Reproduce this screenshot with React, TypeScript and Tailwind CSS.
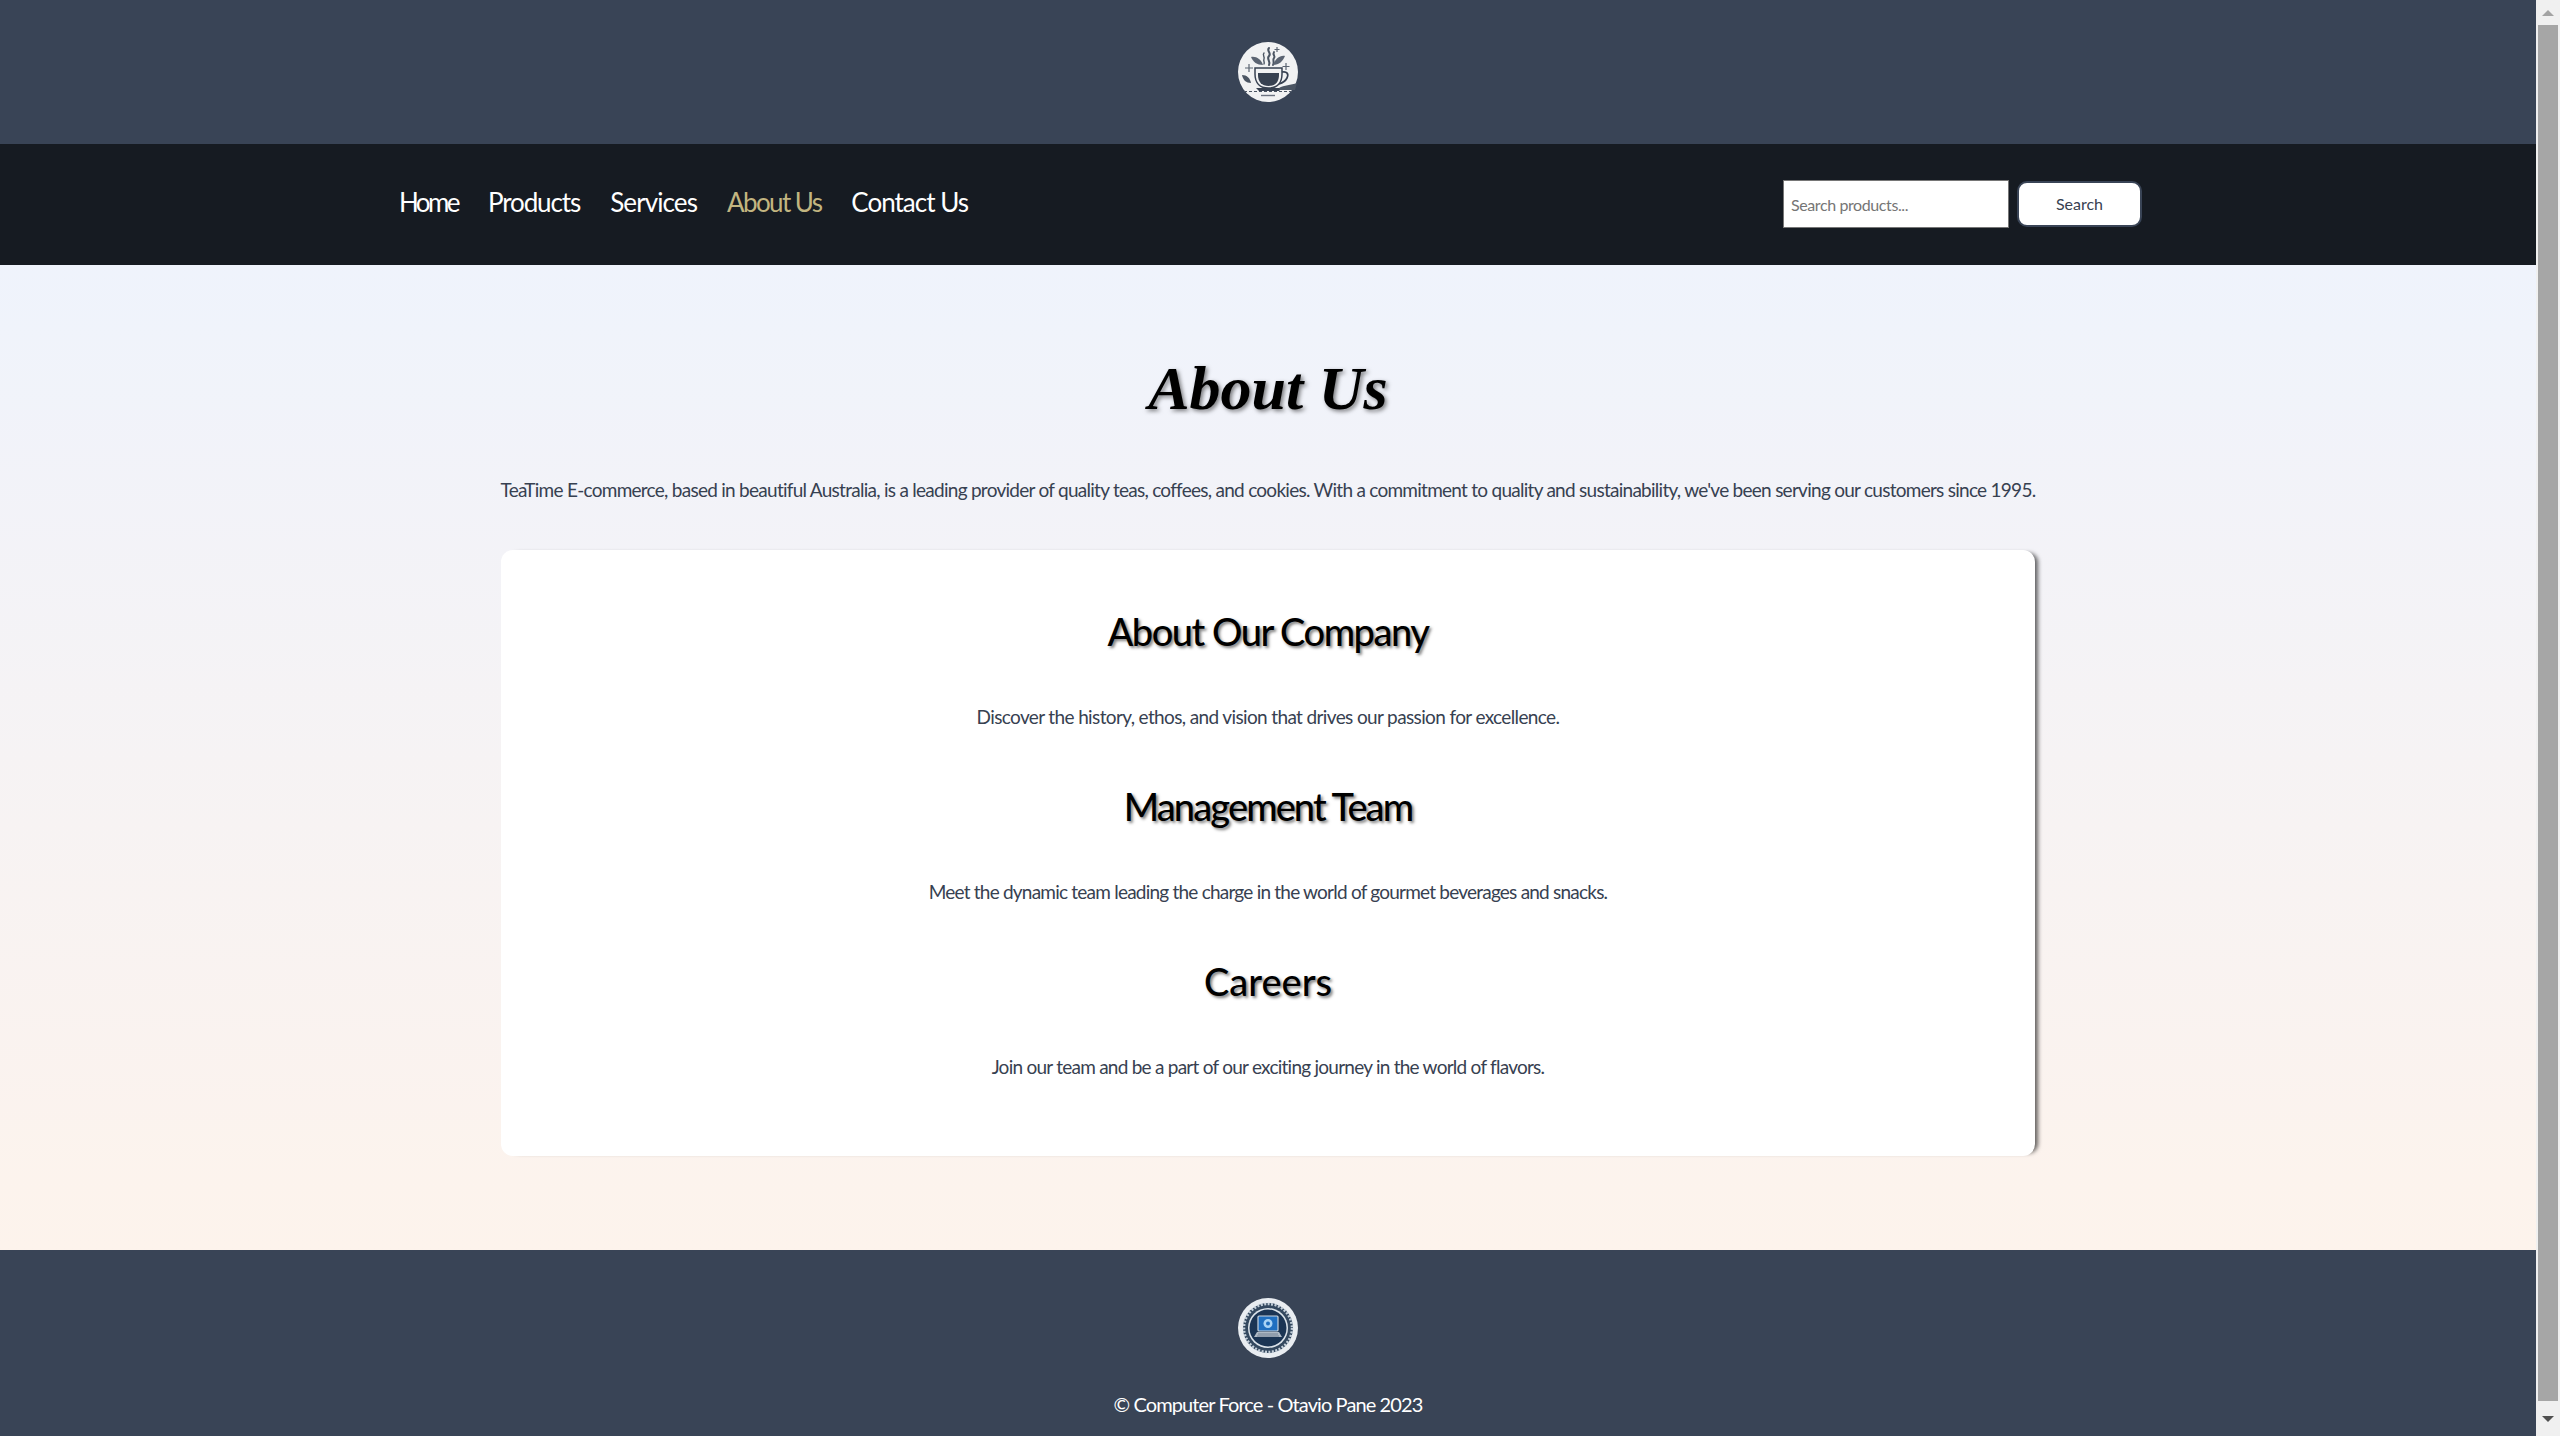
import React from "react";

function TeaLogo() {
  return (
    <svg viewBox="0 0 60 60" className="w-[60px] h-[60px] block">
      <circle cx="30" cy="30" r="30" fill="#f1f2f3" />
      <g fill="none" stroke="#4b5563" strokeWidth="2" strokeLinecap="round">
        <path d="M31 6c-3 3 3 5 0 8s2 5 0 9" />
        <path d="M36 10c-2 3 2 4 0 6s1 4-1 7" />
        <path d="M26 11c-2 2 1 4 0 6s1 3 0 5" strokeWidth="1.400" />
      </g>
      <path d="M13 15c5-1 10 2 12 8-6 0-10-3-12-8z" fill="#5b6472" />
      <path d="M47 14c-5-1-10 3-12 9 6 0 10-4 12-9z" fill="#5b6472" />
      <path d="M4 33c5 0 8 3 9 8-5 0-8-3-9-8z" fill="#4b5563" />
      <path d="M11 22v8M7 26h8M48 21v7M44.500 24.500h7M39 5v5M36.500 7.500h5" stroke="#5b6472" strokeWidth="1.200" />
      <path d="M17 26h27v6c0 9-5 14-13.500 14S17 41 17 32z" fill="#f1f2f3" stroke="#374151" strokeWidth="1.500" />
      <path d="M20 31h21v2c0 7-4 11-10.500 11S20 40 20 33z" fill="#374151" />
      <path d="M44 30c5-1 7 2 5 6s-5 5-8 6" fill="none" stroke="#374151" strokeWidth="1.700" />
      <path d="M18 46h26l-3 3H21z" fill="#374151" />
      <path d="M41 46c5-3 12-3 18-5l-2 7H42z" fill="#4b5563" />
      <path d="M6 49.500h48" stroke="#4b5563" strokeWidth="1.200" strokeDasharray="3 2" />
      <path d="M23 53.500h14" stroke="#6b7280" strokeWidth="1.400" />
    </svg>
  );
}

function ForceLogo() {
  return (
    <svg viewBox="0 0 60 60" className="w-[60px] h-[60px] block">
      <circle cx="30" cy="30" r="30" fill="#e9edf1" />
      <circle cx="30" cy="30" r="25" fill="#33485f" />
      <circle cx="30" cy="30" r="24" fill="none" stroke="#c5d0da" strokeWidth="2.500" strokeDasharray="2 1.500" />
      <circle cx="30" cy="30" r="20" fill="#dbe3ea" />
      <circle cx="30" cy="30" r="18.500" fill="#1b3554" />
      <rect x="20" y="18" width="20" height="15" rx="1" fill="#1f6fc0" stroke="#c9d3dc" strokeWidth="1.200" />
      <circle cx="30" cy="25.500" r="4.500" fill="#a8d3f5" />
      <circle cx="30" cy="25.500" r="2" fill="#1f6fc0" />
      <path d="M19 34h22l3 5H16z" fill="#aeb9c4" />
      <path d="M20 36h20M19 38h22" stroke="#64748b" strokeWidth="0.800" />
    </svg>
  );
}

const navItems = [
  { label: "Home", cls: "text-white tracking-[-2.6px]" },
  { label: "Products", cls: "text-white tracking-[-1.1px]" },
  { label: "Services", cls: "text-white tracking-[-0.9px]" },
  { label: "About Us", cls: "text-[#c2b580] tracking-[-1.6px]" },
  { label: "Contact Us", cls: "text-white tracking-[-1px]" },
];

const sections = [
  {
    title: "About Our Company",
    titleCls: "tracking-[-1.5px]",
    textCls: "tracking-[-0.63px]",
    text: "Discover the history, ethos, and vision that drives our passion for excellence.",
  },
  {
    title: "Management Team",
    titleCls: "tracking-[-1.9px]",
    textCls: "tracking-[-0.78px]",
    text: "Meet the dynamic team leading the charge in the world of gourmet beverages and snacks.",
  },
  {
    title: "Careers",
    titleCls: "tracking-[0px]",
    textCls: "tracking-[-0.75px]",
    text: "Join our team and be a part of our exciting journey in the world of flavors.",
  },
];

export default function App() {
  return (
    <div className="flex h-screen overflow-hidden font-['Lato',sans-serif]">
      <div className="w-[2536px] shrink-0 flex flex-col">
        <header className="h-[144px] shrink-0 bg-[#394456] flex items-center justify-center">
          <TeaLogo />
        </header>
        <nav className="h-[121px] shrink-0 bg-[#161b22]">
          <div className="w-[1748px] h-full mx-auto flex items-center justify-between pl-[5px]">
            <ul className="flex gap-[30px] text-[26px] mb-[4px]">
              {navItems.map((n) => (
                <li key={n.label} className={n.cls}>
                  {n.label}
                </li>
              ))}
            </ul>
            <form className="flex items-center gap-[8px] mt-[-1px]">
              <input
                placeholder="Search products..."
                className="w-[226px] h-[48px] bg-white border border-[#767676] px-[7px] text-[16px] tracking-[-0.4px] text-[#111827] placeholder:text-[#757575] outline-none"
              />
              <button
                type="button"
                className="w-[125px] h-[46px] bg-white border-2 border-[#394456] rounded-[10px] text-[16px] text-[#374151]"
              >
                Search
              </button>
            </form>
          </div>
        </nav>
        <main className="h-[985px] shrink-0 bg-gradient-to-b from-[#eff3fc] to-[#fdf3ec] flex flex-col items-center">
          <h1 className="mt-[85px] h-[76px] leading-[76px] text-[62px] font-bold italic font-['Liberation_Serif',serif] text-black [text-shadow:2px_2px_4px_rgba(0,0,0,0.5)]">
            About Us
          </h1>
          <p className="mt-[48px] h-[32px] leading-[32px] text-[19px] tracking-[-0.73px] text-[#374151] whitespace-nowrap">
            TeaTime E-commerce, based in beautiful Australia, is a leading provider of quality teas, coffees, and cookies. With a commitment to quality and sustainability, we've been serving our customers since 1995.
          </p>
          <section className="mt-[44px] w-[1534px] h-[606px] bg-white rounded-[12px] shadow-[6px_0_4px_-3px_rgba(0,0,0,0.6)] flex flex-col items-center pt-[54px]">
            {sections.map((s) => (
              <div key={s.title} className="h-[175px] flex flex-col items-center">
                <h2 className={`h-[54px] leading-[54px] text-[38px] font-medium text-black [text-shadow:2px_2px_3px_rgba(0,0,0,0.5)] ${s.titleCls}`}>
                  {s.title}
                </h2>
                <p className={`mt-[43px] leading-[32px] text-[19px] text-[#374151] ${s.textCls}`}>{s.text}</p>
              </div>
            ))}
          </section>
        </main>
        <footer className="h-[186px] shrink-0 bg-[#394456] flex flex-col items-center pt-[48px]">
          <ForceLogo />
          <p className="mt-[30px] leading-[32px] text-[20px] tracking-[-0.9px] text-white">© Computer Force - Otavio Pane 2023</p>
        </footer>
      </div>
      <aside className="w-[24px] shrink-0 bg-[#f0f0f0] flex flex-col items-center">
        <div className="h-[25px] w-full flex items-center justify-center">
          <div className="w-0 h-0 border-x-[6px] border-x-transparent border-b-[6px] border-b-[#a3a3a3]" />
        </div>
        <div className="w-[20px] flex-1 bg-[#a6a6a6]" />
        <div className="h-[35px] w-full flex items-center justify-center">
          <div className="w-0 h-0 border-x-[6px] border-x-transparent border-t-[6px] border-t-[#505050]" />
        </div>
      </aside>
    </div>
  );
}
